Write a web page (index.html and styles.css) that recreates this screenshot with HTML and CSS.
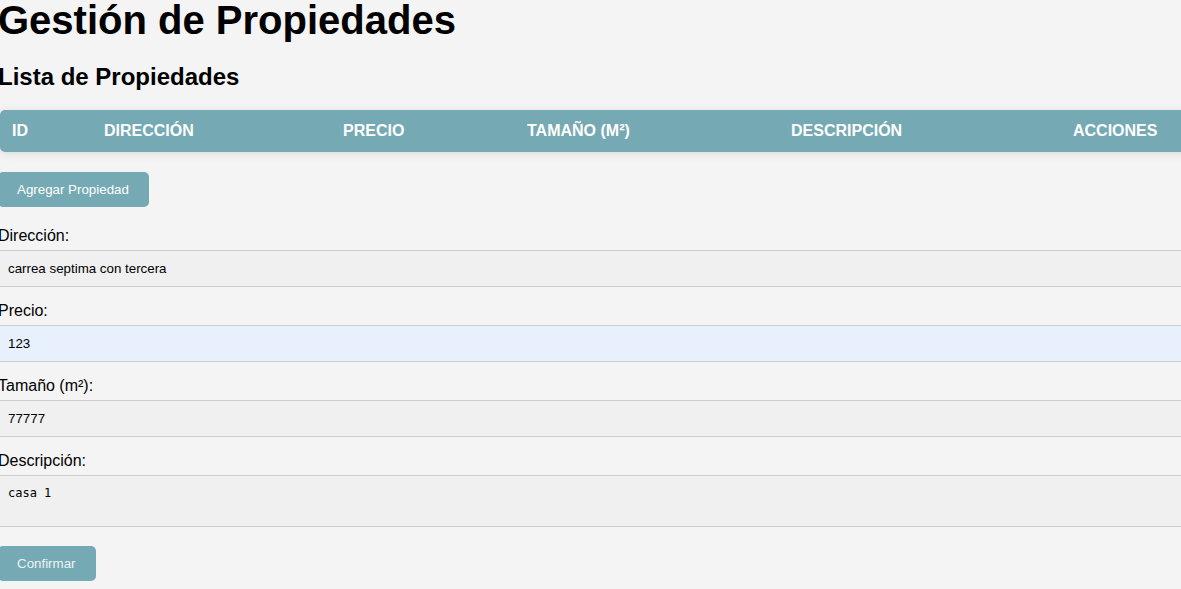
FILE: index.html
```html
<!DOCTYPE html>
<html lang="es">
<head>
<meta charset="utf-8">
<title>Gestión de Propiedades</title>
<link rel="stylesheet" href="styles.css">
</head>
<body>
<main class="page">
  <h1 class="title">Gestión de Propiedades</h1>
  <h2 class="subtitle">Lista de Propiedades</h2>
  <table class="props">
    <colgroup>
      <col class="c-id"><col class="c-dir"><col class="c-price"><col class="c-size"><col class="c-desc"><col class="c-act">
    </colgroup>
    <thead>
      <tr>
        <th>ID</th>
        <th>Dirección</th>
        <th>Precio</th>
        <th>Tamaño (m²)</th>
        <th>Descripción</th>
        <th>Acciones</th>
      </tr>
    </thead>
  </table>
  <button class="btn btn-add" type="button">Agregar Propiedad</button>
  <form class="form">
    <label class="label" for="dir">Dirección:</label>
    <input class="field" id="dir" type="text" value="carrea septima con tercera">
    <label class="label" for="price">Precio:</label>
    <input class="field field-auto" id="price" type="text" value="123">
    <label class="label" for="size">Tamaño (m²):</label>
    <input class="field" id="size" type="text" value="77777">
    <label class="label" for="desc">Descripción:</label>
    <textarea class="field area" id="desc">casa 1</textarea>
    <button class="btn btn-confirm" type="button">Confirmar</button>
  </form>
</main>
</body>
</html>
```
FILE: styles.css
```css
html, body {
  margin: 0;
  padding: 0;
  background: #f4f4f4;
  overflow: hidden;
}
body {
  font-family: "Liberation Sans", Arial, sans-serif;
  color: #000;
}
.page {
  margin-left: -2px;
}
.title {
  font-size: 40px;
  line-height: 40px;
  font-weight: bold;
  margin: 0 0 25px;
}
.subtitle {
  font-size: 24px;
  line-height: 24px;
  font-weight: bold;
  margin: 0 0 21px;
}
.props {
  width: 1200px;
  table-layout: fixed;
  border-collapse: separate;
  border-spacing: 0;
  background: #75a9b3;
  border-radius: 5px;
  box-shadow: 0 2px 10px rgba(0, 0, 0, 0.1);
  margin: 0 0 20px 2px;
}
.c-id { width: 92px; }
.c-dir { width: 239px; }
.c-price { width: 184px; }
.c-size { width: 264px; }
.c-desc { width: 282px; }
.c-act { width: 139px; }
.props th {
  color: #fff;
  font-size: 16px;
  line-height: 18px;
  font-weight: bold;
  text-transform: uppercase;
  text-align: left;
  padding: 12px 0 12px 12px;
  white-space: nowrap;
}
.btn {
  display: block;
  background: #75a9b3;
  color: #fff;
  border: none;
  border-radius: 5px;
  font-family: "Liberation Sans", Arial, sans-serif;
  font-size: 13.33px;
  line-height: 15px;
  padding: 10px 20px 10px 19px;
  cursor: pointer;
}
.btn-add {
  margin: 0 0 20px;
}
.btn-confirm {
  color: #eef3f4;
  margin: 0;
}
.form {
  display: flex;
  flex-direction: column;
  align-items: flex-start;
  margin: 0;
}
.label {
  display: block;
  font-size: 16px;
  line-height: 18px;
  margin: 0 0 5px;
}
.field {
  box-sizing: border-box;
  width: 1190px;
  margin: 0 0 15px;
  padding: 10px;
  border-style: solid;
  border-color: #cccccc;
  border-width: 1px 0;
  border-radius: 0;
  background: #f0f0f0;
  color: #000;
  font-family: "Liberation Sans", Arial, sans-serif;
  font-size: 13.33px;
  line-height: 15px;
  outline: none;
}
.field-auto {
  background: #e8f0fe;
}
.area {
  height: 52px;
  resize: none;
  font-family: "DejaVu Sans Mono", monospace;
  font-size: 12px;
  line-height: 15px;
  margin-bottom: 19px;
}
```
